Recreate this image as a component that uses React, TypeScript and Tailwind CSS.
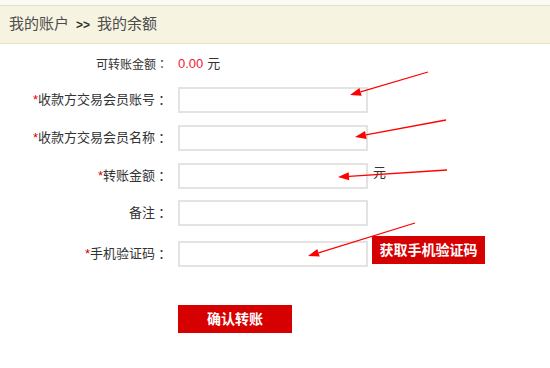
import type { ReactNode } from "react";

const arrows = [
  { x1: 428, y1: 72, x2: 350, y2: 95 },
  { x1: 446, y1: 120, x2: 355, y2: 137 },
  { x1: 447, y1: 170, x2: 338, y2: 177 },
  { x1: 415, y1: 223, x2: 308, y2: 256 },
];

function Arrow({ x1, y1, x2, y2 }: { x1: number; y1: number; x2: number; y2: number }) {
  const dx = x2 - x1;
  const dy = y2 - y1;
  const len = Math.hypot(dx, dy);
  const ux = dx / len;
  const uy = dy / len;
  const bx = x2 - ux * 11;
  const by = y2 - uy * 11;
  const px = -uy * 4;
  const py = ux * 4;
  return (
    <g>
      <line x1={x1} y1={y1} x2={bx} y2={by} stroke="#ff0000" strokeWidth="1.3" />
      <polygon
        points={`${x2},${y2} ${bx + px},${by + py} ${bx - px},${by - py}`}
        fill="#ff0000"
      />
    </g>
  );
}

// centred full-width colon, as in the original page
function Colon() {
  return <span className="font-['Noto_Sans_CJK_TC',sans-serif]">：</span>;
}

function Row({
  label,
  required,
  className,
  children,
}: {
  label: string;
  required?: boolean;
  className?: string;
  children: ReactNode;
}) {
  return (
    <div className={`flex items-start ${className ?? ""}`}>
      <div className="w-[168px] h-[26px] flex items-center justify-end text-[13px] text-[#333]">
        {required && <span className="text-[#e00000]">*</span>}
        {label}
        <Colon />
      </div>
      <div className="ml-[10px] flex items-start">{children}</div>
    </div>
  );
}

function Field() {
  return (
    <input
      type="text"
      className="w-[190px] h-[26px] border-2 border-[#e3e3e3] bg-white outline-none"
    />
  );
}

export default function App() {
  return (
    <div className="relative w-[550px] h-[368px] bg-white overflow-hidden font-['Liberation_Sans','Noto_Sans_CJK_SC',sans-serif]">
      <div className="h-[5px] bg-[#fbfbf6]" />

      {/* HEADER */}
      <div className="h-[39px] flex items-center pl-[9px] bg-[#f6f4e1] border-y border-[#e6e2c8] text-[15px] text-[#4d4d4d]">
        <span>我的账户</span>
        <span className="mx-[7px] text-[12px] font-bold text-[#333]">&gt;&gt;</span>
        <span>我的余额</span>
      </div>

      {/* FORM */}
      <div className="flex flex-col">
        <div className="mt-[7px] flex items-center h-[26px]">
          <div className="w-[168px] text-right text-[12px] text-[#333]">
            可转账金额
            <Colon />
          </div>
          <div className="ml-[10px] text-[13px]">
            <span className="text-[#f0203a]">0.00</span>
            <span className="ml-[4px] text-[#333]">元</span>
          </div>
        </div>

        <Row label="收款方交易会员账号" required className="mt-[10px]">
          <Field />
        </Row>

        <Row label="收款方交易会员名称" required className="mt-[12px]">
          <Field />
        </Row>

        <Row label="转账金额" required className="mt-[12px]">
          <Field />
          <span className="ml-[5px] text-[13px] leading-[20px] text-[#333]">元</span>
        </Row>

        <Row label="备注" className="mt-[11px]">
          <Field />
        </Row>

        <Row label="手机验证码" required className="mt-[15px]">
          <Field />
          <button className="ml-[4px] -mt-[5px] w-[113px] h-[28px] bg-[#d50000] text-white text-[14px] font-bold cursor-pointer">
            获取手机验证码
          </button>
        </Row>

        {/* SUBMIT */}
        <button className="mt-[38px] ml-[178px] w-[114px] h-[28px] bg-[#d70000] text-white text-[14px] font-bold cursor-pointer">
          确认转账
        </button>
      </div>

      {/* ANNOTATION ARROWS */}
      <svg className="absolute left-0 top-0 pointer-events-none" width="550" height="368">
        {arrows.map((a, i) => (
          <Arrow key={i} {...a} />
        ))}
      </svg>
    </div>
  );
}
